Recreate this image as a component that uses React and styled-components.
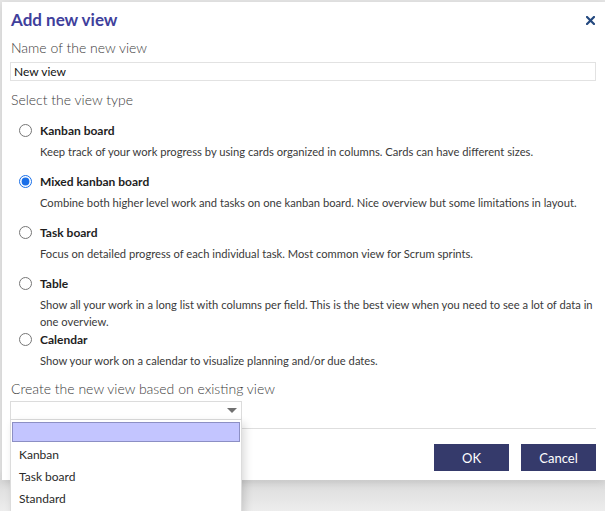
import React from "react";
import styled, { createGlobalStyle } from "styled-components";

const Global = createGlobalStyle`
  html, body { margin: 0; padding: 0; }
  body {
    background: linear-gradient(#e6e6e6 0, #e6e6e6 470px, #dcdcdc 482px, #ededed 511px);
    font-family: Lato, "Open Sans", sans-serif;
    overflow: hidden;
  }
`;

const Page = styled.div`
  padding: 2px 0 0 2px;
  height: 511px;
  box-sizing: border-box;
`;

const Dialog = styled.div`
  background: #fff;
  width: 603px;
  box-sizing: border-box;
  padding: 7px 9px 9px 8px;
  box-shadow: 0 2px 8px rgba(0, 0, 0, 0.12);
  position: relative;
`;

const Content = styled.div`
  display: flex;
  flex-direction: column;
`;

const Header = styled.div`
  display: flex;
  justify-content: space-between;
  align-items: center;
`;

const Title = styled.h1`
  margin: 0 0 0 1px;
  font-size: 17px;
  line-height: 22px;
  font-weight: 700;
  color: #403f9c;
`;

const Close = styled.button`
  border: 0;
  background: none;
  padding: 0;
  width: 12px;
  height: 12px;
  margin: 0;
  display: flex;
  align-items: center;
  justify-content: center;
  cursor: pointer;
`;

const Label = styled.div`
  margin-top: ${(p) => p.$mt}px;
  margin-left: 1px;
  font-size: 14px;
  line-height: ${(p) => p.$lh || 18}px;
  font-weight: 300;
  color: #3c3c3c;
`;

const TextInput = styled.input`
  margin-top: 5px;
  height: 19px;
  box-sizing: border-box;
  width: 100%;
  border: 1px solid #e2e2e2;
  padding: 0 3px;
  font-family: Lato, "Open Sans", sans-serif;
  font-size: 12px;
  color: #111;
  outline: none;
`;

const RadioList = styled.div`
  margin-top: 13px;
  display: flex;
  flex-direction: column;
  gap: 1px;
`;

const Item = styled.div`
  display: grid;
  grid-template-columns: 22px 1fr;
  padding-left: 8px;
`;

const Radio = styled.input`
  margin: 2px 0 0 1px;
  width: 13px;
  height: 13px;
  accent-color: #1a6fe8;
`;

const ItemTitle = styled.label`
  font-size: 12px;
  line-height: 18px;
  font-weight: 700;
  color: #1e1e1e;
`;

const Desc = styled.div`
  grid-column: 2;
  margin-top: 3px;
  min-height: 29px;
  font-size: 11.2px;
  line-height: 17px;
  color: #3a3a3a;
`;

const SelectWrap = styled.div`
  position: relative;
  margin-top: 4px;
  width: 232px;
`;

const SelectBox = styled.div`
  height: 19px;
  box-sizing: border-box;
  border: 1px solid #dcdcdc;
  background: #fff;
  display: flex;
  align-items: center;
  justify-content: flex-end;
  padding-right: 4px;
`;

const Arrow = styled.span`
  width: 0;
  height: 0;
  border-left: 5px solid transparent;
  border-right: 5px solid transparent;
  border-top: 5px solid #707070;
`;

const Menu = styled.ul`
  position: absolute;
  top: 100%;
  left: 0;
  width: 232px;
  box-sizing: border-box;
  margin: 0;
  padding: 2px 1px 4px 1px;
  list-style: none;
  background: #fff;
  border: 1px solid #dcdcdc;
  border-top: 0;
  box-shadow: 3px 3px 8px rgba(0, 0, 0, 0.14);
  z-index: 5;
`;

const Option = styled.li`
  box-sizing: border-box;
  padding-left: 6px;
  display: flex;
  align-items: center;
  font-size: 12px;
  color: #2a2a2a;
  background: ${(p) => (p.$active ? "#c3c5ff" : "transparent")};
  border: 1px solid ${(p) => (p.$active ? "#8c8fc4" : "transparent")};
  height: ${(p) => (p.$active ? 20 : 22)}px;
  margin-bottom: ${(p) => (p.$active ? 1 : 0)}px;
`;

const Footer = styled.div`
  margin-top: 8px;
  border-top: 1px solid #dedede;
  padding-top: 15px;
  display: flex;
  justify-content: flex-end;
  gap: 12px;
`;

const Button = styled.button`
  width: 75px;
  height: 27px;
  border: 0;
  background: #353a6b;
  color: #fff;
  font-family: Lato, "Open Sans", sans-serif;
  font-size: 13px;
  cursor: pointer;
`;

const options = [
  {
    title: "Kanban board",
    desc: "Keep track of your work progress by using cards organized in columns. Cards can have different sizes.",
  },
  {
    title: "Mixed kanban board",
    desc: "Combine both higher level work and tasks on one kanban board. Nice overview but some limitations in layout.",
    checked: true,
  },
  {
    title: "Task board",
    desc: "Focus on detailed progress of each individual task. Most common view for Scrum sprints.",
  },
  {
    title: "Table",
    desc: "Show all your work in a long list with columns per field. This is the best view when you need to see a lot of data in one overview.",
  },
  {
    title: "Calendar",
    desc: "Show your work on a calendar to visualize planning and/or due dates.",
  },
];

export default function App() {
  return (
    <Page>
      <Global />
      <Dialog>
        <Content>
          <Header>
            <Title>Add new view</Title>
            <Close aria-label="Close">
              <svg width="9" height="9" viewBox="0 0 9 9">
                <path d="M1 1 L8 8 M8 1 L1 8" stroke="#24497f" strokeWidth="2.2" strokeLinecap="square" />
              </svg>
            </Close>
          </Header>
          <Label $mt={8}>Name of the new view</Label>
          <TextInput defaultValue="New view" />
          <Label $mt={10}>Select the view type</Label>
          <RadioList>
            {options.map((o, i) => (
              <Item key={o.title}>
                <Radio type="radio" name="viewtype" id={`vt${i}`} defaultChecked={!!o.checked} />
                <ItemTitle htmlFor={`vt${i}`}>{o.title}</ItemTitle>
                <Desc>{o.desc}</Desc>
              </Item>
            ))}
          </RadioList>
          <Label $mt={0} $lh={16}>Create the new view based on existing view</Label>
          <SelectWrap>
            <SelectBox>
              <Arrow />
            </SelectBox>
            <Menu>
              <Option $active />
              <Option>Kanban</Option>
              <Option>Task board</Option>
              <Option>Standard</Option>
            </Menu>
          </SelectWrap>
          <Footer>
            <Button>OK</Button>
            <Button>Cancel</Button>
          </Footer>
        </Content>
      </Dialog>
    </Page>
  );
}
